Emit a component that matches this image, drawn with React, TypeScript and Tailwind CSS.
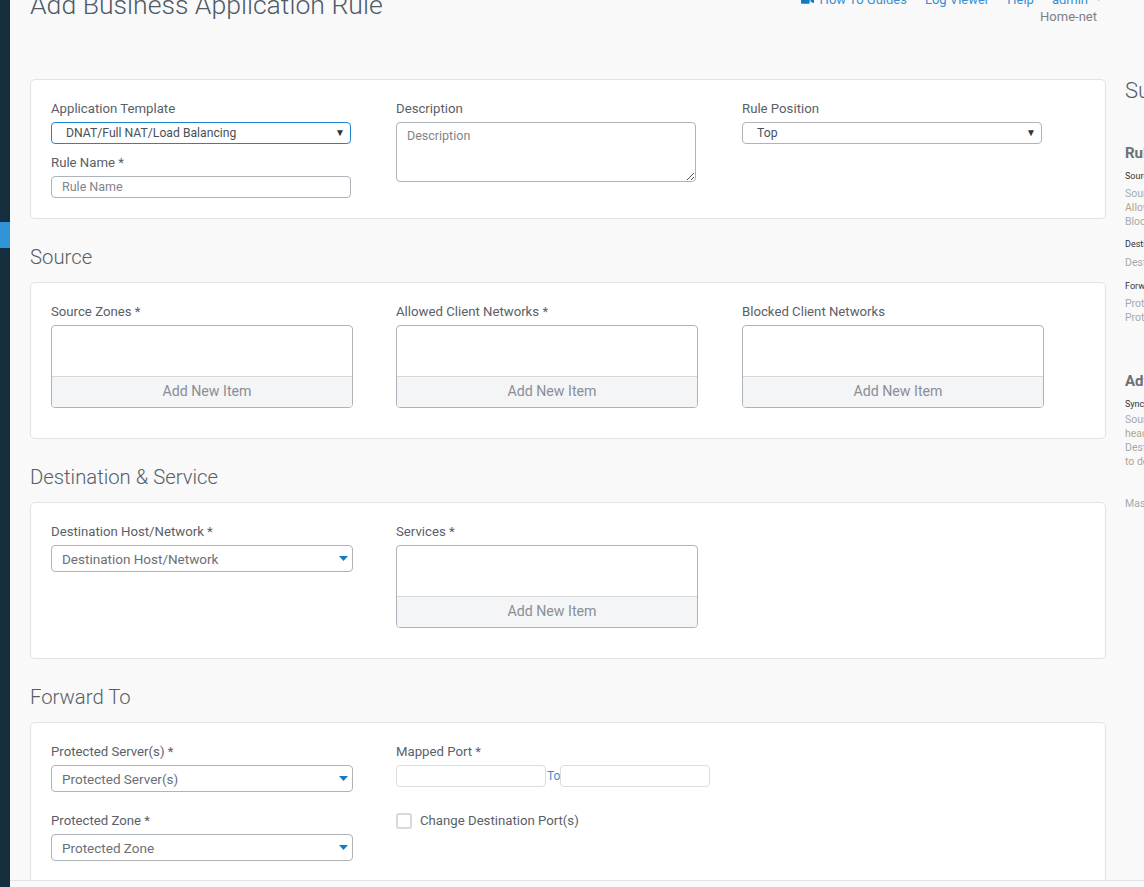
import { FaVideo } from "react-icons/fa"

const font = "font-['Roboto','Liberation_Sans',sans-serif]"

function Field({ label, children }: { label: string; children: React.ReactNode }) {
  return (
    <div>
      <div className="h-[17px] text-[13.2px] leading-[17px] text-[#5a6069]">{label}</div>
      {children}
    </div>
  )
}

function AddList() {
  return (
    <div className="mt-[5px] h-[83px] w-[302px] overflow-hidden rounded-[4px] border border-[#aeb3ba] bg-white">
      <div className="h-[51px] border-b border-[#d5d7da]" />
      <div className="h-[30px] bg-[#f4f5f7] pl-[10px] text-center text-[14.2px] leading-[29px] text-[#8a8f96]">Add New Item</div>
    </div>
  )
}

function NativeSelect({ text, focus }: { text: string; focus?: boolean }) {
  return (
    <div className={`mt-[5px] flex h-[22px] w-[300px] items-center justify-between rounded-[4px] border bg-white pl-[14px] pr-[5px] text-[12.2px] text-[#4a5058] ${focus ? "border-[#1b87cf]" : "border-[#aeb3ba]"}`}>
      <span>{text}</span>
      <span className="text-[10px] leading-none text-[#2d3640]">▼</span>
    </div>
  )
}

function BlueSelect({ text }: { text: string }) {
  return (
    <div className="mt-[5px] flex h-[27px] w-[302px] items-center justify-between rounded-[4px] border border-[#aeb3ba] bg-white pl-[10px] pr-[4px] text-[13.5px] text-[#6b7078]">
      <span className="pt-[1px]">{text}</span>
      <svg width="9" height="5" viewBox="0 0 12 6" preserveAspectRatio="none">
        <path d="M0 0h12L6 6z" fill="#0f7cc4" />
      </svg>
    </div>
  )
}

function Section({ title }: { title: string }) {
  return <h2 className="mb-[12px] mt-[26px] h-[25px] text-[20.3px] font-light leading-[25px] text-[#555d68]">{title}</h2>
}

function Card({ className, children }: { className: string; children: React.ReactNode }) {
  return <div className={`rounded-[5px] border border-[#e2e3e5] bg-white px-[20px] ${className}`}>{children}</div>
}

const grid = "grid grid-cols-[345px_346px_1fr]"

export default function App() {
  return (
    <div className={`flex h-[887px] w-[1144px] overflow-hidden bg-[#f9f9f9] ${font}`}>
      <aside className="w-[10px] shrink-0 bg-[#152e3d] pt-[222px]">
        <div className="h-[26px] bg-[#2f93d6]" />
      </aside>

      <div className="flex min-w-0 flex-1 flex-col">
        <main className="flex min-h-0 flex-1">
          <div className="w-[1096px] shrink-0 pl-[20px]">
            <header className="flex h-[79px] items-start justify-between">
              <h1 className="-mt-[11px] text-[26.6px] font-light leading-[32px] text-[#4f5a68]">Add Business Application Rule</h1>
              <div className="-mt-[9px] mr-[4px] flex shrink-0 flex-col items-end text-[13px] leading-[17px]">
                <div className="flex items-center gap-[18px] text-[#3b8fd0]">
                  <span className="flex items-center gap-[6px]">
                    <FaVideo className="text-[13px] text-[#0f7cc4]" />
                    How To Guides
                  </span>
                  <span>Log Viewer</span>
                  <span>Help</span>
                  <span className="flex items-center gap-[7px]">admin <span className="text-[7px]">▼</span></span>
                </div>
                <div className="mr-[5px] mt-0 text-[#7b8087]">Home-net</div>
              </div>
            </header>

            <Card className="h-[140px] pt-[20px]">
              <div className={grid}>
                <div>
                  <Field label="Application Template">
                    <NativeSelect text="DNAT/Full NAT/Load Balancing" focus />
                  </Field>
                  <div className="mt-[10px]">
                    <Field label="Rule Name *">
                      <div className="mt-[5px] flex h-[22px] w-[300px] items-center rounded-[4px] border border-[#aeb3ba] bg-white pl-[10px] text-[12.5px] text-[#80858c]">Rule Name</div>
                    </Field>
                  </div>
                </div>
                <Field label="Description">
                  <div className="relative mt-[5px] h-[60px] w-[300px] rounded-[4px] border border-[#aeb3ba] bg-white pl-[10px] pt-[4px] text-[12.5px] text-[#80858c]">
                    Description
                    <svg width="8" height="8" viewBox="0 0 8 8" className="absolute bottom-[1px] right-[1px]">
                      <path d="M1 8L8 1M5 8L8 5" stroke="#555" strokeWidth="1" />
                    </svg>
                  </div>
                </Field>
                <Field label="Rule Position">
                  <NativeSelect text="Top" />
                </Field>
              </div>
            </Card>

            <Section title="Source" />
            <Card className="h-[157px] pt-[20px]">
              <div className={grid}>
                <Field label="Source Zones *"><AddList /></Field>
                <Field label="Allowed Client Networks *"><AddList /></Field>
                <Field label="Blocked Client Networks"><AddList /></Field>
              </div>
            </Card>

            <Section title="Destination & Service" />
            <Card className="h-[157px] pt-[20px]">
              <div className={grid}>
                <Field label="Destination Host/Network *"><BlueSelect text="Destination Host/Network" /></Field>
                <Field label="Services *"><AddList /></Field>
              </div>
            </Card>

            <Section title="Forward To" />
            <Card className="h-[200px] pt-[20px]">
              <div className={grid}>
                <div>
                  <Field label="Protected Server(s) *"><BlueSelect text="Protected Server(s)" /></Field>
                  <div className="mt-[20px]">
                    <Field label="Protected Zone *"><BlueSelect text="Protected Zone" /></Field>
                  </div>
                </div>
                <div>
                  <Field label="Mapped Port *">
                    <div className="mt-[5px] flex h-[22px] items-center">
                      <div className="h-[22px] w-[150px] rounded-[4px] border border-[#dcdddf] bg-white" />
                      <span className="w-[14px] pl-[1px] text-[12px] text-[#3b8fd0]">To</span>
                      <div className="h-[22px] w-[150px] rounded-[4px] border border-[#dcdddf] bg-white" />
                    </div>
                  </Field>
                  <div className="mt-[24px] flex items-center">
                    <div className="h-[16px] w-[16px] rounded-[3px] border-2 border-[#d9d9d9] bg-white" />
                    <span className="ml-[8px] text-[13.2px] text-[#5a6069]">Change Destination Port(s)</span>
                  </div>
                </div>
              </div>
            </Card>
          </div>

          <aside className="min-w-0 flex-1 overflow-hidden whitespace-nowrap pl-[19px] pt-[78px]">
            <div className="h-[26px] text-[22px] font-light leading-[26px] text-[#555d68]">Summary</div>
            <div className="mt-[39px] h-[20px] text-[15px] font-bold leading-[20px] text-[#6b7078]">Rule Summary</div>
            <div className="mt-[7px] text-[9px] leading-[12px] text-[#333]">Source</div>
            <div className="mt-[5px] text-[10.5px] leading-[14px] text-[#a5a9ae]">
              <div>Source Zones</div>
              <div className="text-[#b5a58a]">Allowed Client Networks</div>
              <div>Blocked Client Networks</div>
            </div>
            <div className="mt-[9px] text-[9px] leading-[12px] text-[#333]">Destination</div>
            <div className="mt-[6px] text-[10.5px] leading-[14px] text-[#a5a9ae]">Destination Host</div>
            <div className="mt-[10px] text-[9px] leading-[12px] text-[#333]">Forward To</div>
            <div className="mt-[5px] text-[10.5px] leading-[14px] text-[#a5a9ae]">
              <div>Protected Server</div>
              <div>Protected Zone</div>
            </div>
            <div className="mt-[46px] h-[20px] text-[15px] font-bold leading-[20px] text-[#6b7078]">Advanced</div>
            <div className="mt-[7px] text-[9px] leading-[12px] text-[#333]">Synchronize</div>
            <div className="mt-[3px] text-[10.5px] leading-[14px] text-[#b5a58a]">
              <div className="text-[#a5a9ae]">Source</div>
              <div>header</div>
              <div className="text-[#a5a9ae]">Destination</div>
              <div>to destination</div>
            </div>
            <div className="mt-[28px] text-[10.5px] leading-[14px] text-[#a5a9ae]">Masquerade</div>
          </aside>
        </main>
        <footer className="h-[7px] shrink-0 border-t border-[#e2e3e5] bg-[#f9f9f9]" />
      </div>
    </div>
  )
}
